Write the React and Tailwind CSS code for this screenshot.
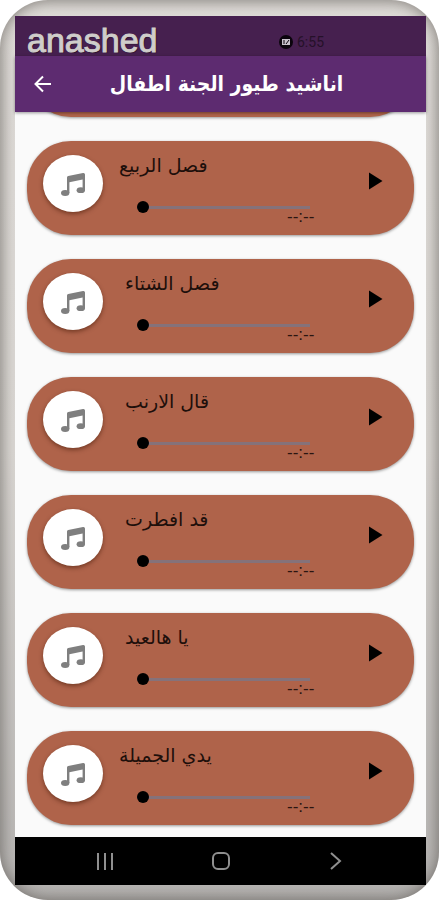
import { useState } from "react";

// some titles are stored with a trailing space
const songs = [
  { id: 1, title: "فصل الربيع" },
  { id: 2, title: "فصل الشتاء " },
  { id: 3, title: "قال الارنب " },
  { id: 4, title: "قد افطرت " },
  { id: 5, title: "يا هالعيد " },
  { id: 6, title: "يدي الجميلة" },
];

function MusicIcon() {
  return (
    <svg viewBox="0 0 26 26" className="h-[26px] w-[26px]" fill="#7f7f7f">
      <path d="M7 6.500Q7 5.300 8.200 5L23 2Q25 1.700 25 3.500V19h-2.400V8.500L9.400 11.200V22H7Z" />
      <ellipse cx="5.200" cy="22" rx="4.200" ry="2.900" />
      <ellipse cx="20.800" cy="19.200" rx="4.200" ry="2.900" />
    </svg>
  );
}

function SongCard({ song }) {
  const [position, setPosition] = useState(0);

  return (
    <li className="flex h-[94px] shrink-0 rounded-[44px] bg-[#af634a] pl-4 pr-7 shadow-[0_1px_3px_rgba(0,0,0,0.4)]">
      <div className="mt-[14px] flex h-[57px] w-[60px] shrink-0 items-center justify-center rounded-[50%] bg-white shadow-[0_2px_4px_rgba(60,20,0,0.5)]">
        <MusicIcon />
      </div>
      <div className="ml-4 flex min-w-0 flex-1 flex-col">
        <h2
          dir="rtl"
          className="mt-2 h-8 w-fit whitespace-pre text-[19px] leading-8 text-[#1d0f0b]"
        >
          {song.title}
        </h2>
        <input
          type="range"
          aria-label={song.title.trim()}
          value={position}
          onChange={(e) => setPosition(Number(e.target.value))}
          className="ml-[18px] mt-5 h-3 w-[173px] appearance-none bg-[linear-gradient(#85727a,#85727a)] bg-[length:100%_3px] bg-center bg-no-repeat [&::-webkit-slider-thumb]:h-3 [&::-webkit-slider-thumb]:w-3 [&::-webkit-slider-thumb]:appearance-none [&::-webkit-slider-thumb]:rounded-full [&::-webkit-slider-thumb]:bg-black"
        />
        <span className="ml-[168px] h-2 font-['Liberation_Sans'] text-[17px] leading-2 text-[#2b1510]">
          --:--
        </span>
      </div>
      <button aria-label="Play" className="mb-[14px] w-[21px] shrink-0">
        <svg viewBox="0 0 20 20" className="h-5 w-5" fill="#000">
          <path d="M4 1.500v17L17.500 10Z" />
        </svg>
      </button>
    </li>
  );
}

export default function App() {
  return (
    <div className="h-screen bg-white font-['DejaVu_Sans',sans-serif]">
      <div className="flex h-full flex-col rounded-[48px] bg-[linear-gradient(#dedbd7,#d9d6d2_50%,#b5b3b1)] pb-[15px] pl-[15px] pr-[13px] pt-4 shadow-[inset_0_0_14px_2px_rgba(80,75,70,0.6)]">
        {/* Status bar */}
        <div className="flex h-10 shrink-0 items-center justify-between bg-[#46204f] pl-3 pr-[102px]">
          <span className="mt-2 font-['Liberation_Sans'] text-[34px] leading-8 text-[#cfcdca] [-webkit-text-stroke:1px_#cfcdca] [text-shadow:1px_1px_1px_#241029]">
            anashed
          </span>
          <span className="mt-3 flex items-center gap-1 font-['Roboto'] text-sm text-[#251029]">
            <svg viewBox="0 0 14 14" className="h-[14px] w-[14px]">
              <circle cx="7" cy="7" r="7" fill="#0b040d" />
              <rect x="3" y="4" width="8" height="6" fill="#c9c2cc" />
              <path d="M5 5v4M7 9l3-4" stroke="#0b040d" />
            </svg>
            6:55
          </span>
        </div>

        {/* App bar */}
        <header className="relative z-10 flex h-14 shrink-0 items-center bg-[#5d2b70] pl-4 pr-7 shadow-[0_1px_3px_rgba(0,0,0,0.4)]">
          <button aria-label="Back">
            <svg
              viewBox="0 0 24 24"
              className="h-6 w-6"
              fill="none"
              stroke="#fff"
              strokeWidth="2"
            >
              <path d="M20 12H5M12 4.500 4.500 12 12 19.500" />
            </svg>
          </button>
          <h1
            dir="rtl"
            className="flex-1 whitespace-nowrap text-center font-['DejaVu_Sans_Condensed','DejaVu_Sans'] text-[21px] font-bold leading-8 text-white"
          >
            اناشيد طيور الجنة اطفال
          </h1>
        </header>

        {/* Songs */}
        <ul className="flex min-h-0 flex-1 flex-col justify-end gap-6 overflow-hidden bg-[#fafafa] px-3 pb-3">
          {/* end of the card that is scrolled under the app bar */}
          <li
            aria-hidden="true"
            className="h-[94px] shrink-0 rounded-[44px] bg-[#af634a] shadow-[0_1px_3px_rgba(0,0,0,0.4)]"
          />
          {songs.map((song) => (
            <SongCard key={song.id} song={song} />
          ))}
        </ul>

        {/* Navigation bar */}
        <nav className="flex h-12 shrink-0 items-center justify-between bg-black px-[78px]">
          <button aria-label="Recent apps">
            <svg viewBox="0 0 24 24" className="h-6 w-6" stroke="#8f8f8f" strokeWidth="2">
              <path d="M5 4v17M12 4v17M19 4v17" />
            </svg>
          </button>
          <button aria-label="Home">
            <svg viewBox="0 0 24 24" className="h-6 w-6" fill="none" stroke="#8f8f8f" strokeWidth="2">
              <rect x="4" y="4" width="16" height="16" rx="5" />
            </svg>
          </button>
          <button aria-label="Back to previous app">
            <svg viewBox="0 0 24 24" className="h-6 w-6" fill="none" stroke="#8f8f8f" strokeWidth="2">
              <path d="m7 4 9 8-9 8" />
            </svg>
          </button>
        </nav>
      </div>
    </div>
  );
}
